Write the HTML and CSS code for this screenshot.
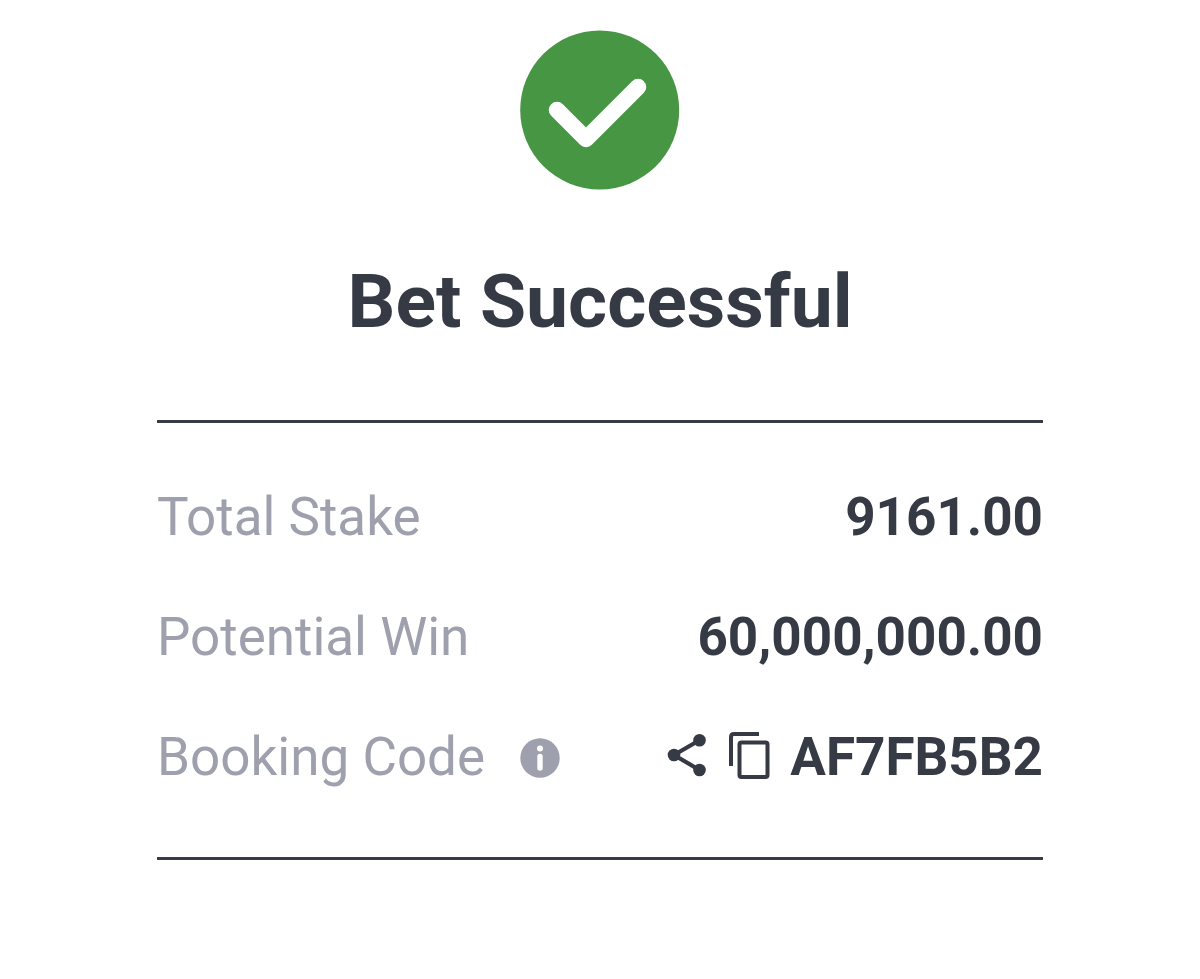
FILE: index.html
```html
<!DOCTYPE html>
<html lang="en">
<head>
    <meta charset="UTF-8">
    <meta name="viewport" content="width=device-width, initial-scale=1.0">
    <title>Bet Successful</title>
    <link rel="stylesheet" href="styles.css">
</head>
<body>

<main class="bet-result">
    <svg class="success-icon" viewBox="0 0 160 160" aria-hidden="true">
        <circle cx="79.7" cy="80" r="79.5" fill="#479644"/>
        <path d="M37 80 L66 109 L118 57" fill="none" stroke="#fff" stroke-width="16.5" stroke-linecap="round" stroke-linejoin="round"/>
    </svg>
    <h1>Bet Successful</h1>

    <!-- Bet details -->
    <dl class="bet-details">
        <div class="row">
            <dt>Total Stake</dt>
            <dd>9161.00</dd>
        </div>
        <div class="row">
            <dt>Potential Win</dt>
            <dd>60,000,000.00</dd>
        </div>
        <div class="row">
            <dt>
                Booking Code
                <button type="button" class="icon-btn info-btn" aria-label="About booking code">
                    <svg width="40" height="42" viewBox="0 0 40 42">
                        <circle cx="20" cy="22" r="19.7" fill="#9ea0ad"/>
                        <circle cx="20" cy="12.5" r="3" fill="#fff"/>
                        <path d="M20 20.5 V32" stroke="#fff" stroke-width="5.4" stroke-linecap="round"/>
                    </svg>
                </button>
            </dt>
            <dd>
                <button type="button" class="icon-btn" aria-label="Share">
                    <svg width="40" height="48" viewBox="0 0 40 48">
                        <path d="M32.5 7.3 L7 22 L32.5 37" fill="none" stroke="#353a45" stroke-width="4.2"/>
                        <circle cx="32.5" cy="7.3" r="6.3" fill="#353a45"/>
                        <circle cx="7" cy="22" r="6.3" fill="#353a45"/>
                        <circle cx="32.5" cy="37" r="6.3" fill="#353a45"/>
                    </svg>
                </button>
                <button type="button" class="icon-btn copy-btn" aria-label="Copy booking code">
                    <svg width="42" height="50" viewBox="0 0 42 50">
                        <path d="M3 34 V5 Q3 2 6 2 H31" fill="none" stroke="#353a45" stroke-width="4"/>
                        <rect x="11.5" y="10.5" width="28" height="34.5" rx="2" fill="none" stroke="#353a45" stroke-width="4"/>
                    </svg>
                </button>
                <span>AF7FB5B2</span>
            </dd>
        </div>
    </dl>
</main>

</body>
</html>
```
FILE: styles.css
```css
body {
    font-family: Roboto, Arial, sans-serif;
    margin: 0;
    background-color: #fff;
    color: #353a45;
}

.bet-result {
    display: flex;
    flex-direction: column;
    align-items: center;
    max-width: 886px;
    margin: 0 auto;
    padding: 30px 20px;
}

.success-icon {
    width: 160px;
    height: 160px;
}

h1 {
    margin: 61px 0 69px;
    font-size: 75px;
    line-height: 100px;
    font-weight: 700;
}

.bet-details {
    box-sizing: border-box;
    width: 100%;
    margin: 0;
    padding: 34px 0 40px;
    border-top: 3px solid #353a45;
    border-bottom: 3px solid #353a45;
}

.row {
    display: flex;
    justify-content: space-between;
    align-items: center;
    height: 120px;
    font-size: 53px;
}

dt,
dd {
    display: flex;
    align-items: center;
    margin: 0;
    white-space: nowrap;
}

dt {
    color: #9ea0ad;
}

dd {
    font-weight: 700;
}

.icon-btn {
    display: flex;
    padding: 0;
    border: none;
    background: none;
    cursor: pointer;
}

.info-btn {
    margin-left: 35px;
}

.copy-btn {
    margin: 0 20px 0 21px;
}
```
